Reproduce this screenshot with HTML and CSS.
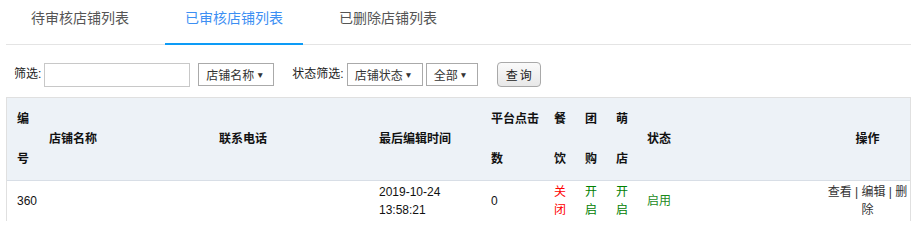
FILE: index.html
```html
<!DOCTYPE html>
<html lang="zh-CN">
<head>
<meta charset="utf-8">
<title>已审核店铺列表</title>
<link rel="stylesheet" href="styles.css">
</head>
<body>
<div class="page">
  <div class="tabs">
    <div class="tab">待审核店铺列表</div>
    <div class="tab active">已审核店铺列表</div>
    <div class="tab">已删除店铺列表</div>
  </div>

  <div class="filters">
    <span class="label">筛选:</span>
    <input class="text-input" type="text">
    <div class="select sel-name"><span>店铺名称</span><span class="arrow">▼</span></div>
    <span class="label label-status">状态筛选:</span>
    <div class="select sel-status"><span>店铺状态</span><span class="arrow">▼</span></div>
    <div class="select sel-all"><span>全部</span><span class="arrow">▼</span></div>
    <button class="btn" type="button">查询</button>
  </div>

  <div class="grid">
    <div class="row head">
      <div class="cell">编号</div>
      <div class="cell">店铺名称</div>
      <div class="cell">联系电话</div>
      <div class="cell">最后编辑时间</div>
      <div class="cell">平台点击数</div>
      <div class="cell">餐饮</div>
      <div class="cell">团购</div>
      <div class="cell">萌店</div>
      <div class="cell">状态</div>
      <div class="cell ops">操作</div>
    </div>
    <div class="row body">
      <div class="cell">360</div>
      <div class="cell"></div>
      <div class="cell"></div>
      <div class="cell">2019-10-24 13:58:21</div>
      <div class="cell">0</div>
      <div class="cell off">关闭</div>
      <div class="cell on">开启</div>
      <div class="cell on">开启</div>
      <div class="cell enabled">启用</div>
      <div class="cell ops">查看 | 编辑 | 删除</div>
    </div>
  </div>
</div>
</body>
</html>
```

FILE: styles.css
```css
html, body {
  margin: 0;
  padding: 0;
  background: #fff;
}

body {
  font-family: "Liberation Sans", "Noto Sans CJK SC", sans-serif;
  font-size: 12px;
  color: #333;
}

.page {
  margin: 0 1px 0 6px;
}

/* Tabs */
.tabs {
  display: flex;
  gap: 16px;
  padding-left: 5px;
  border-bottom: 1px solid #e4e4e4;
}

.tab {
  height: 36px;
  line-height: 36px;
  padding: 0 20px 7px;
  font-size: 14px;
  color: #555;
  margin-bottom: -1px;
  border-bottom: 2px solid transparent;
}

.tab.active {
  color: #3d8ff3;
  border-bottom-color: #0d9bf6;
}

/* Filters */
.filters {
  display: flex;
  align-items: center;
  height: 25px;
  margin: 17px 0 10px;
  padding-left: 8px;
  color: #222;
}

.label {
  line-height: 25px;
}

.text-input {
  box-sizing: border-box;
  width: 146px;
  height: 24px;
  margin: 0 0 0 3px;
  padding: 0 4px;
  border: 1px solid #c8c8c8;
  background: #fff;
  outline: none;
}

.select {
  box-sizing: border-box;
  display: flex;
  align-items: center;
  justify-content: space-between;
  height: 23px;
  padding: 0 9px 0 7px;
  border: 1px solid #aaa;
  background: #fff;
  color: #333;
  font-size: 12px;
}

.select .arrow {
  font-size: 8.5px;
  color: #333;
}

.sel-name {
  width: 76px;
  margin-left: 8px;
}

.label-status {
  margin-left: 18px;
}

.sel-status {
  width: 76px;
  margin-left: 3px;
}

.sel-all {
  width: 52px;
  margin-left: 3px;
}

.btn {
  box-sizing: border-box;
  width: 44px;
  height: 25px;
  margin-left: 19px;
  padding: 0;
  border: 1px solid #a9a9a9;
  border-radius: 4px;
  background: linear-gradient(#fafafa, #e8e8e8);
  font-family: "Liberation Sans", "Noto Sans CJK SC", sans-serif;
  font-size: 12px;
  letter-spacing: 2px;
  text-indent: 2px;
  color: #222;
}

/* Table grid */
.grid {
  border: 1px solid #e0e0e0;
  border-bottom: none;
}

.row {
  display: grid;
  grid-template-columns: 32px 170px 160px 112px 63px 31px 31px 31px 182px 91px;
  align-items: center;
}

.cell {
  padding: 0 4px 0 10px;
}

.head {
  background: #edf2f7;
  border-bottom: 1px solid #d8dee6;
  color: #111;
  font-weight: bold;
}

.head .cell {
  line-height: 40px;
  padding-top: 1px;
  padding-bottom: 1px;
}

.body .cell {
  line-height: 18px;
  padding-top: 2px;
  padding-bottom: 2px;
  color: #111;
}

.cell.ops {
  text-align: center;
  padding-left: 8px;
  padding-right: 2px;
}

.body .cell.ops {
  color: #333;
}

.body .cell.off {
  color: #ff0000;
}

.body .cell.on {
  color: #008000;
}

.body .cell.enabled {
  color: #1b8a1b;
}
```
